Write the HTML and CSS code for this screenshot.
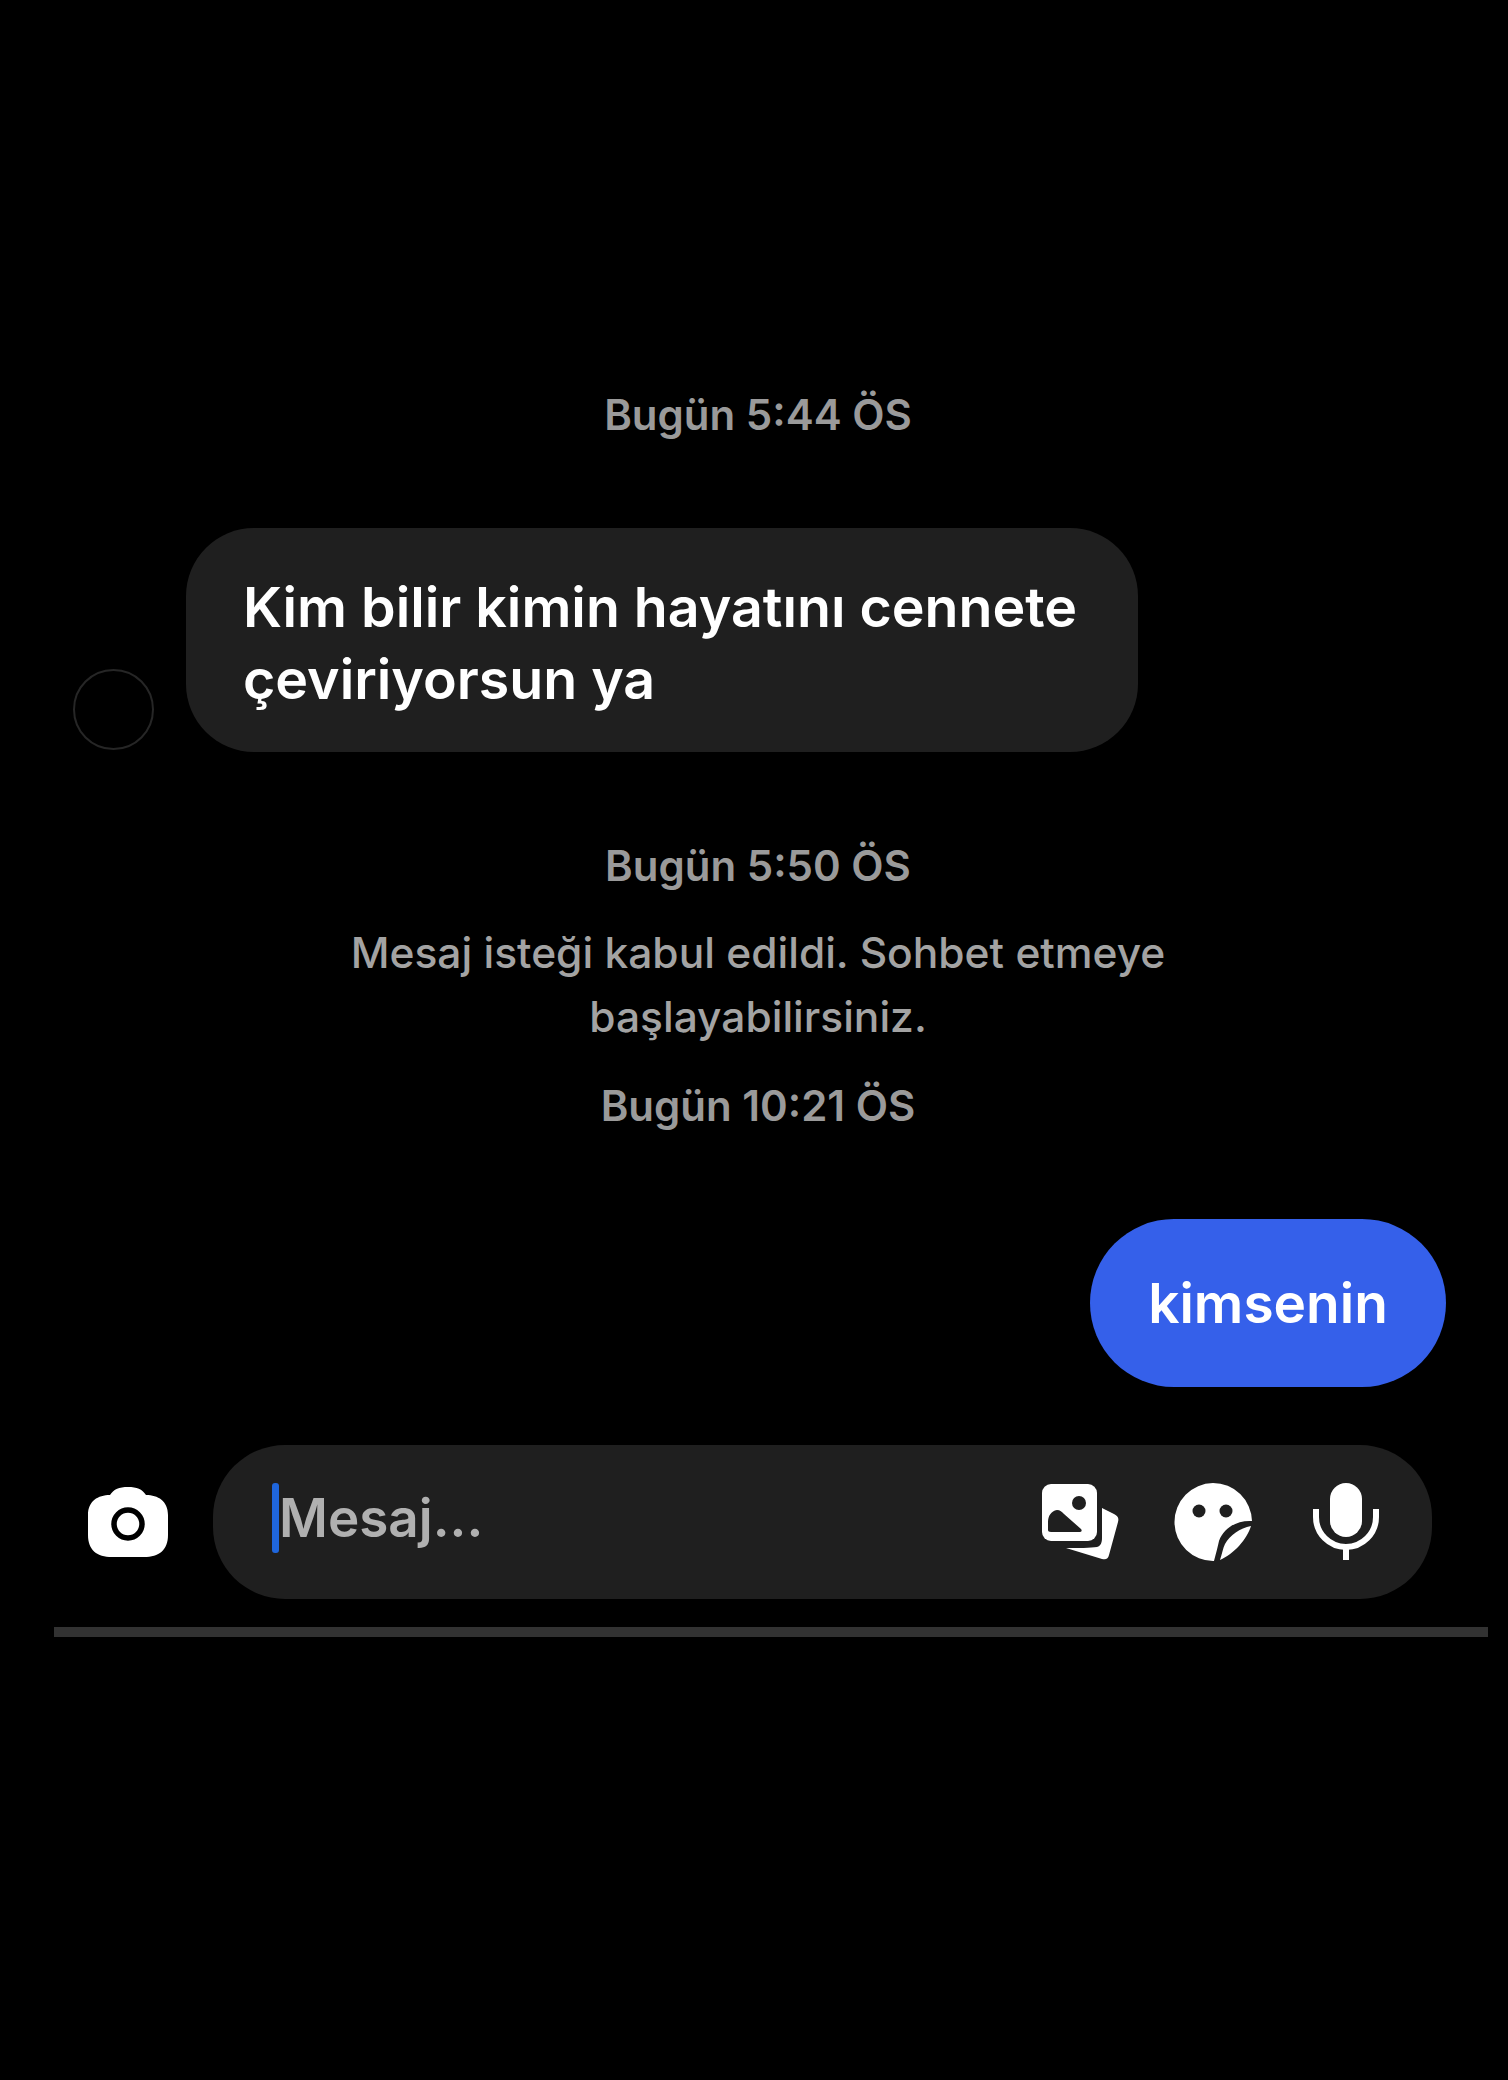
FILE: index.html
```html
<!DOCTYPE html>
<html lang="tr">

<head>
    <meta charset="UTF-8">
    <meta name="viewport" content="width=device-width, initial-scale=1.0">
    <title>Mesajlar</title>
    <link rel="stylesheet" href="styles.css">
</head>

<body>

    <main class="chat">
        <div class="stamp stamp-first">Bugün 5:44 ÖS</div>

        <div class="row-in">
            <div class="avatar"></div>
            <div class="bubble-in">Kim bilir kimin hayatını cennete<br>çeviriyorsun ya</div>
        </div>

        <div class="stamp stamp-second">Bugün 5:50 ÖS</div>
        <p class="notice">Mesaj isteği kabul edildi. Sohbet etmeye<br>başlayabilirsiniz.</p>
        <div class="stamp stamp-third">Bugün 10:21 ÖS</div>

        <div class="row-out">
            <div class="bubble-out">kimsenin</div>
        </div>

        <div class="composer-row">
            <svg class="icon-camera" viewBox="0 0 80 70">
                <path fill="#fff" d="M40 0c9 0 14 2 18 8c12 0 22 6 22 20v20c0 15-9 22-24 22H24C9 70 0 63 0 48V28C0 14 10 8 22 8c4-6 9-8 18-8z"/>
                <circle cx="40" cy="37" r="14" fill="#fff" stroke="#000" stroke-width="5.5"/>
            </svg>
            <div class="composer">
                <div class="input">
                    <span class="caret"></span>
                    <span class="placeholder">Mesaj...</span>
                </div>
                <div class="actions">
                    <svg class="icon" viewBox="0 0 78 78">
                        <path fill="#fff" d="M61 25l12 6c4 2 5 4 4 8l-9 33c-1 4-3 5-7 4l-36-11c12 0 25 0 31-1c4-1 5-5 5-9z"/>
                        <rect x="1" y="1" width="55" height="57" rx="9" fill="#fff" stroke="#1f1f1f" stroke-width="3" paint-order="stroke"/>
                        <circle cx="38" cy="20" r="7" fill="#1f1f1f"/>
                        <path fill="#1f1f1f" d="M7 47V39c0-6 3-11 9-12c3 0 5 2 7 4l17 15c1 1 1 3-1 3H10c-2 0-3-1-3-2z"/>
                    </svg>
                    <svg class="icon" viewBox="0 0 78 78">
                        <path fill="#fff" d="M39 0a39 39 0 0 1 39 38c-14-1-28 6-33 20c-1 5-3 12-5 20A39 39 0 0 1 39 0z"/>
                        <path fill="#fff" d="M77 43c-4 13-17 28-31 34c2-6 3-12 5-16c5-9 15-16 26-18z"/>
                        <circle cx="25" cy="28" r="6.5" fill="#1f1f1f"/>
                        <circle cx="52" cy="28" r="6.5" fill="#1f1f1f"/>
                    </svg>
                    <svg class="icon" viewBox="0 0 78 78">
                        <rect x="23" y="0" width="32" height="54" rx="16" fill="#fff"/>
                        <path fill="none" stroke="#fff" stroke-width="6" d="M9 26v8a30 30 0 0 0 60 0v-8"/>
                        <path fill="none" stroke="#fff" stroke-width="6" d="M39 64v13"/>
                    </svg>
                </div>
            </div>
        </div>

        <div class="divider"></div>
    </main>

</body>

</html>
```

FILE: styles.css
```css
body {
    margin: 0;
    background-color: #000;
    color: #fff;
    font-family: 'Inter', 'Noto Sans', sans-serif;
    min-height: 2080px;
}

.chat {
    display: flex;
    flex-direction: column;
    padding-top: 392px;
}

.stamp {
    text-align: center;
    font-size: 42px;
    line-height: 46px;
    font-weight: 600;
    color: #9a9a9a;
    padding-left: 8px;
}

.row-in {
    display: flex;
    align-items: flex-end;
    margin-top: 90px;
    padding-left: 73px;
    gap: 32px;
}

.avatar {
    width: 77px;
    height: 77px;
    margin-bottom: 2px;
    border: 2px solid #262626;
    border-radius: 50%;
    flex-shrink: 0;
}

.bubble-in {
    width: 952px;
    height: 224px;
    padding-left: 57px;
    padding-top: 43px;
    box-sizing: border-box;
    background-color: #1f1f1f;
    border-radius: 68px;
    font-size: 55.5px;
    line-height: 72px;
    font-weight: 600;
}

.stamp-second {
    margin-top: 91px;
}

.notice {
    margin: 32px 0 0;
    padding-left: 8px;
    text-align: center;
    font-size: 42.5px;
    line-height: 64px;
    font-weight: 500;
    color: #a3a3a3;
}

.stamp-third {
    margin-top: 34px;
}

.row-out {
    display: flex;
    justify-content: flex-end;
    margin-top: 90px;
    padding-right: 62px;
}

.bubble-out {
    display: flex;
    align-items: center;
    justify-content: center;
    width: 356px;
    height: 168px;
    background-color: #3560ea;
    border-radius: 84px;
    font-size: 55px;
    font-weight: 600;
}

.composer-row {
    display: flex;
    align-items: center;
    margin-top: 58px;
    padding-left: 88px;
    gap: 45px;
}

.icon-camera {
    width: 80px;
    height: 70px;
    flex-shrink: 0;
}

.composer {
    display: flex;
    align-items: center;
    justify-content: space-between;
    width: 1219px;
    height: 154px;
    padding-left: 59px;
    padding-right: 47px;
    box-sizing: border-box;
    background-color: #1f1f1f;
    border-radius: 72px;
}

.input {
    display: flex;
    align-items: center;
    margin-bottom: 8px;
}

.caret {
    width: 7px;
    height: 70px;
    border-radius: 3px;
    background-color: #1f66dc;
}

.placeholder {
    font-size: 53px;
    font-weight: 600;
    color: #b0b0b0;
}

.actions {
    display: flex;
    align-items: center;
    gap: 55px;
}

.icon {
    width: 78px;
    height: 78px;
}

.divider {
    height: 10px;
    margin: 28px 20px 0 54px;
    background-color: #323232;
}
```
